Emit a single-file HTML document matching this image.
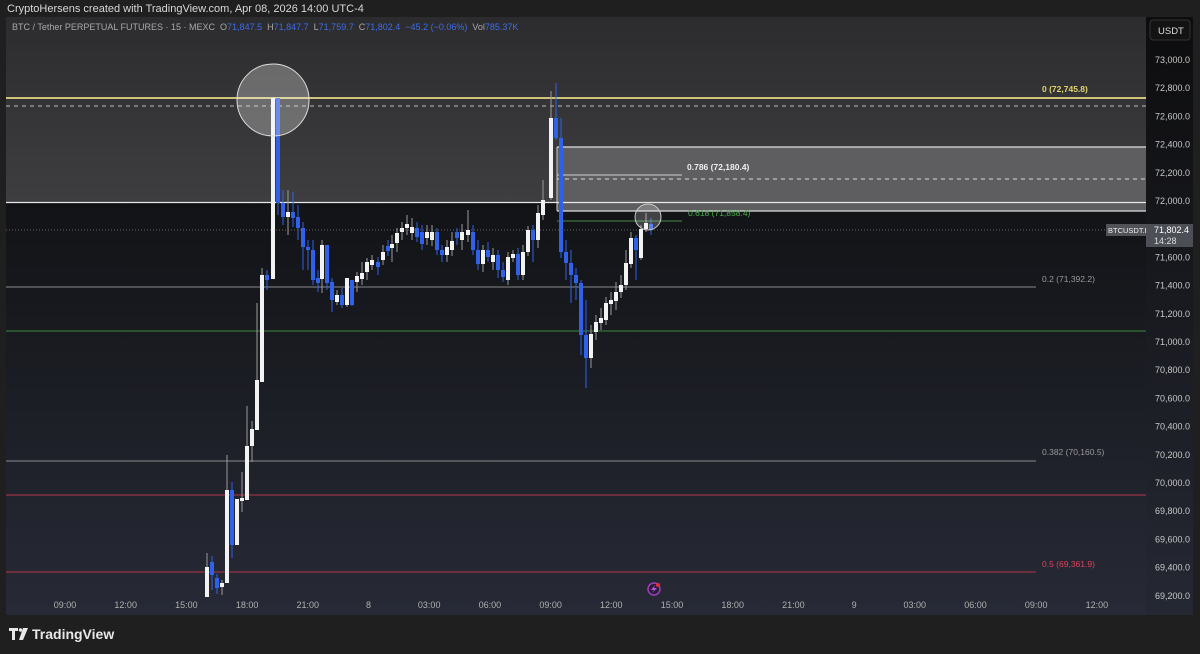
<!DOCTYPE html>
<html><head><meta charset="utf-8"><style>
*{margin:0;padding:0}
body{width:1200px;height:654px;background:#1f1f1f;overflow:hidden;font-family:"Liberation Sans",sans-serif;position:relative}
.t{position:absolute;white-space:nowrap}
</style></head><body>
<div class="t" style="left:7px;top:3px;font-size:11px;color:#d8d8d8">CryptoHersens created with TradingView.com, Apr 08, 2026 14:00 UTC-4</div>
<svg width="1200" height="654" style="position:absolute;left:0;top:0" xmlns="http://www.w3.org/2000/svg">
<defs>
<linearGradient id="gt" x1="0" y1="0" x2="0" y2="1"><stop offset="0" stop-color="#2c2c2e"/><stop offset="1" stop-color="#3e3e40"/></linearGradient>
<linearGradient id="gb" x1="0" y1="0" x2="0" y2="1"><stop offset="0" stop-color="#121316"/><stop offset="1" stop-color="#272a36"/></linearGradient>
<linearGradient id="ga" x1="0" y1="0" x2="0" y2="1"><stop offset="0" stop-color="#0d0d0e"/><stop offset="1" stop-color="#252833"/></linearGradient>
</defs>
<rect x="6" y="17" width="1140" height="186" fill="url(#gt)"/>
<rect x="6" y="203" width="1140" height="412" fill="url(#gb)"/>
<rect x="1146" y="17" width="47" height="598" fill="url(#ga)"/>
<rect x="1150" y="20" width="40" height="20" rx="3" fill="#131313" stroke="#333" />
<text x="1158" y="34" font-size="9.5" fill="#ddd" font-family="Liberation Sans">USDT</text>
<rect x="557" y="147" width="589" height="64" fill="#5e5e60"/>
<line x1="557" y1="147" x2="1146" y2="147" stroke="#ddd" stroke-width="1.2"/>
<line x1="557" y1="211" x2="1146" y2="211" stroke="#ddd" stroke-width="1.2"/>
<line x1="557" y1="147" x2="557" y2="211" stroke="#ccc" stroke-width="1"/>
<line x1="557" y1="179" x2="1146" y2="179" stroke="#ddd" stroke-dasharray="4 4"/>
<line x1="557" y1="175" x2="682" y2="175" stroke="#ccc"/>
<line x1="557" y1="221" x2="682" y2="221" stroke="#4a8a4a"/>
<line x1="6" y1="98" x2="1146" y2="98" stroke="#cfc37a" stroke-width="2"/>
<line x1="6" y1="106" x2="1146" y2="106" stroke="#bbb" stroke-dasharray="4 4"/>
<line x1="6" y1="202.5" x2="1146" y2="202.5" stroke="#e8e8e8" stroke-width="1.2"/>
<line x1="6" y1="230" x2="1146" y2="230" stroke="#666" stroke-dasharray="1 2"/>
<line x1="6" y1="287" x2="1036" y2="287" stroke="#8a8a8a"/>
<line x1="6" y1="331" x2="1146" y2="331" stroke="#3e8a3e"/>
<line x1="6" y1="461" x2="1036" y2="461" stroke="#8a8a8a"/>
<line x1="6" y1="495" x2="1146" y2="495" stroke="#b8344a"/>
<line x1="6" y1="572" x2="1036" y2="572" stroke="#b8344a"/>
<g id="c"></g>
<circle cx="273" cy="100" r="36" fill="rgba(255,255,255,0.28)" stroke="#ddd" stroke-width="1"/>
<circle cx="648" cy="217" r="13" fill="rgba(255,255,255,0.2)" stroke="#ccc" stroke-width="1"/>
<g font-family="Liberation Sans" font-size="8.5">
<text x="1042" y="92" fill="#e0d46a" font-weight="bold">0 (72,745.8)</text>
<text x="687" y="170" fill="#eee" font-weight="bold">0.786 (72,180.4)</text>
<text x="688" y="216" fill="#4caf50">0.618 (71,858.4)</text>
<text x="1042" y="282" fill="#999">0.2 (71,392.2)</text>
<text x="1042" y="455" fill="#999">0.382 (70,160.5)</text>
<text x="1042" y="567" fill="#e0405a">0.5 (69,361.9)</text>
</g>
<g id="ax" font-family="Liberation Sans" font-size="9" fill="#c8c8c8"></g>
<g id="tx" font-family="Liberation Sans" font-size="9" fill="#b0b0b0"></g>
<rect x="1106" y="224" width="40" height="12" fill="#505258"/>
<text x="1108" y="233" font-size="7.5" fill="#eee" font-family="Liberation Sans">BTCUSDT.P</text>
<rect x="1146" y="224" width="47" height="23" fill="#4d4f56"/>
<text x="1154" y="233" font-size="9" fill="#fff" font-family="Liberation Sans">71,802.4</text>
<text x="1154" y="244" font-size="9" fill="#ddd" font-family="Liberation Sans">14:28</text>
<circle cx="654" cy="589" r="6" fill="#2a1f33" stroke="#9b3fc0" stroke-width="1.5"/>
<path d="M655 585 L651 590 L654 590 L652 593 L657 588 L654 588 Z" fill="#c050e0"/>
<circle cx="658" cy="585" r="2" fill="#e03040"/>
<g fill="#e8e8e8"><path d="M9 628h9v3h-3v9h-3v-9h-3z"/><circle cx="20.5" cy="630" r="1.7"/><path d="M23 628h5l-5 12h-4z"/></g>
<text x="32" y="639" font-size="14" fill="#e8e8e8" font-family="Liberation Sans" font-weight="bold">TradingView</text>
</svg>
<div class="t" style="left:12px;top:22px;font-size:9px;color:#a8a8a8">BTC / Tether PERPETUAL FUTURES · 15 · MEXC &nbsp;O<span style="color:#3d6be8">71,847.5</span> &nbsp;H<span style="color:#3d6be8">71,847.7</span> &nbsp;L<span style="color:#3d6be8">71,759.7</span> &nbsp;C<span style="color:#3d6be8">71,802.4</span> &nbsp;<span style="color:#3d6be8">−45.2 (−0.06%)</span> &nbsp;Vol<span style="color:#3d6be8">785.37K</span></div>
<script>
var NS="http://www.w3.org/2000/svg";
var d=[[207,567,597,553,597,'w'],[212,562,575,556,590,'b'],[217,578,588,574,594,'b'],[222,583,587,580,595,'w'],[227,490,583,455,583,'w'],[232,490,545,482,558,'b'],[237,499,545,499,545,'w'],[242,498,501,472,512,'w'],[247,446,500,406,500,'w'],[252,429,446,421,462,'w'],[257,380,430,303,430,'w'],[262,275,382,268,382,'w'],[267,275,280,270,290,'b'],[273,98,279,98,279,'w'],[278,98,203,98,215,'b'],[283,203,217,190,225,'b'],[288,212,217,190,235,'w'],[293,212,218,192,227,'b'],[298,217,228,205,240,'b'],[303,228,247,222,270,'b'],[308,247,250,240,270,'b'],[313,250,280,240,285,'b'],[318,278,283,270,292,'b'],[322,245,279,240,293,'w'],[327,245,283,245,290,'b'],[332,282,300,278,312,'b'],[337,295,302,290,305,'w'],[342,295,305,288,308,'b'],[347,278,305,278,307,'w'],[352,280,305,280,306,'b'],[357,276,282,272,292,'w'],[362,273,279,262,285,'w'],[367,262,272,258,280,'w'],[372,260,265,255,270,'w'],[378,262,267,257,275,'b'],[383,252,260,245,265,'w'],[388,246,251,240,256,'b'],[392,244,248,235,262,'w'],[397,233,243,228,252,'w'],[402,228,232,222,240,'w'],[407,224,228,215,235,'w'],[412,227,233,218,240,'w'],[417,228,237,222,242,'b'],[422,232,244,225,250,'b'],[427,232,238,225,245,'w'],[432,232,240,225,246,'w'],[437,232,250,228,255,'b'],[442,250,255,245,262,'b'],[447,247,255,240,262,'w'],[452,241,250,232,256,'w'],[457,232,238,228,245,'b'],[462,232,240,224,250,'w'],[468,230,235,210,242,'w'],[473,232,250,225,255,'b'],[478,250,264,240,270,'b'],[483,250,264,245,272,'w'],[488,250,257,242,262,'b'],[493,255,262,248,270,'w'],[498,255,270,250,278,'b'],[503,270,277,262,282,'b'],[508,257,280,252,285,'w'],[513,254,258,250,262,'w'],[518,254,275,248,280,'b'],[523,252,275,245,280,'w'],[528,230,252,226,256,'w'],[533,230,240,225,262,'b'],[538,213,240,205,248,'w'],[543,200,215,180,220,'w'],[551,118,198,91,200,'w'],[556,118,138,83,140,'b'],[561,138,252,118,258,'b'],[566,252,263,240,280,'b'],[571,263,275,250,303,'b'],[576,275,283,268,300,'b'],[581,283,335,280,355,'b'],[586,335,358,300,388,'b'],[591,334,358,325,368,'w'],[596,322,332,315,340,'w'],[601,318,323,308,330,'w'],[606,303,320,297,325,'w'],[611,300,304,292,315,'w'],[616,292,301,282,310,'w'],[621,285,292,275,298,'w'],[626,263,285,250,290,'w'],[631,238,264,232,268,'w'],[636,238,250,235,280,'b'],[641,229,258,225,260,'w'],[646,223,229,213,232,'w'],[651,224,230,218,235,'b']];
var g=document.getElementById('c');
d.forEach(function(c){var col=c[5]=='w'?'#f2f2f2':'#2f62e8';
var l=document.createElementNS(NS,'rect');l.setAttribute('x',c[0]-0.5);l.setAttribute('y',c[3]);l.setAttribute('width',1);l.setAttribute('height',c[4]-c[3]);l.setAttribute('fill',c[5]=='w'?'#9a9a9a':'#2f62e8');g.appendChild(l);
var r=document.createElementNS(NS,'rect');r.setAttribute('x',c[0]-2);r.setAttribute('y',c[1]);r.setAttribute('width',4);r.setAttribute('height',Math.max(1.5,c[2]-c[1]));r.setAttribute('fill',col);g.appendChild(r);});
var ax=document.getElementById('ax');
for(var p=73000,i=0;p>=69200;p-=200,i++){var y=60+i*28.2;if(Math.abs(y-229)<10)continue;var t=document.createElementNS(NS,'text');t.setAttribute('x',1155);t.setAttribute('y',y+3);t.textContent=(p/1000|0)+','+('00'+p%1000).slice(-3)+'.0';ax.appendChild(t);}
var tl=['09:00','12:00','15:00','18:00','21:00','8','03:00','06:00','09:00','12:00','15:00','18:00','21:00','9','03:00','06:00','09:00','12:00'];
var tx=document.getElementById('tx');
tl.forEach(function(s,i){var x=65+i*60.7;var t=document.createElementNS(NS,'text');t.setAttribute('x',x);t.setAttribute('y',608);t.setAttribute('text-anchor','middle');t.textContent=s;tx.appendChild(t);});
</script>
</body></html>
